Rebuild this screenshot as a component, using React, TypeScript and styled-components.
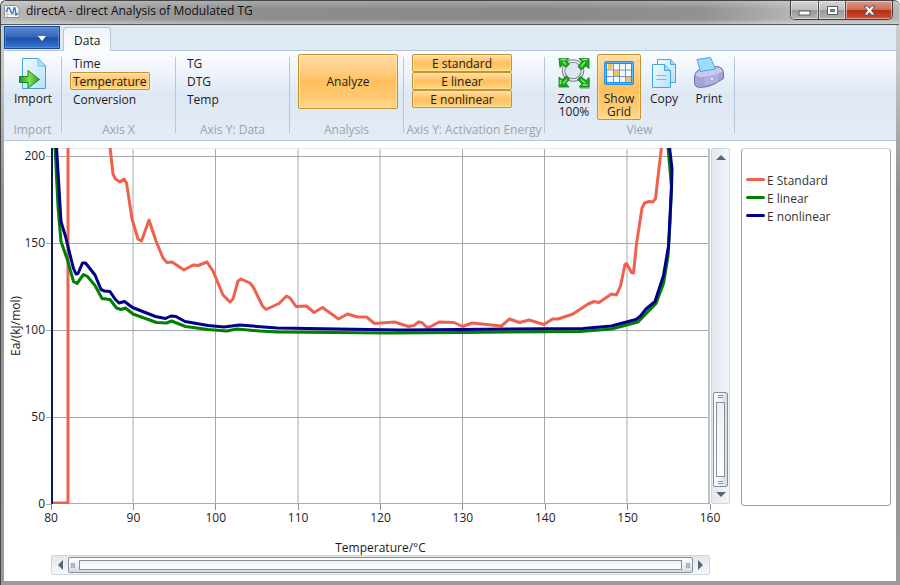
import React, { useState } from "react";
import styled, { createGlobalStyle, css } from "styled-components";

const GlobalStyle = createGlobalStyle`
  * { box-sizing: border-box; }
  html, body { margin: 0; padding: 0; }
  body, button {
    font-family: "Open Sans", "Noto Sans", sans-serif;
    font-size: 12px;
    line-height: 16px;
    color: #1c1c1c;
  }
  button { cursor: default; padding: 0; margin: 0; border: 0; background: none; }
`;

/* ---------- window frame ---------- */

const Window = styled.div`
  display: flex;
  flex-direction: column;
  min-height: 100vh;
  padding: 0 4px 4px 3px;
  background: linear-gradient(#d2d2d2 0, #c4c4c4 70px, #8f9192 190px, #9b9b9b 100%);
  border: solid #454545;
  border-width: 1px 0 0 1px;
  border-radius: 6px 6px 0 0;
`;

const TitleBar = styled.header`
  display: flex;
  align-items: flex-start;
  height: 24px;
  margin: 0 -3px;
  padding: 0 6px 0 3px;
  border-radius: 6px 6px 0 0;
  border-bottom: 1px solid #55595c;
  background:
    linear-gradient(rgba(255, 255, 255, 0.25), rgba(255, 255, 255, 0) 8px, rgba(255, 255, 255, 0) 18px, rgba(255, 255, 255, 0.35)),
    linear-gradient(90deg, #bdbdbd, #a4a4a4 8%, #8d8d8d 30%, #898989 60%, #919191 78%, #b4b4b4 88%);
`;

const Title = styled.h1`
  flex: 1;
  margin: 2px 0 0 6px;
  font-size: 12px;
  line-height: 16px;
  font-weight: 400;
  color: #111;
`;

const TitleIcon = styled.svg`
  width: 16px;
  height: 16px;
  margin-top: 2px;
`;

const WindowButtons = styled.div`
  display: flex;
  height: 19px;
  border: 1px solid #3f3f3f;
  border-top: 0;
  border-radius: 0 0 5px 5px;
  overflow: hidden;
`;

const WindowButton = styled.button<{ $close?: boolean }>`
  display: flex;
  align-items: center;
  justify-content: center;
  width: ${(p) => (p.$close ? 47 : 27)}px;
  border-left: 1px solid #4c4c4c;
  box-shadow: inset 0 0 0 1px rgba(255, 255, 255, 0.45);
  background: ${(p) =>
    p.$close
      ? "linear-gradient(#dc9a88, #cf6b56 48%, #b52f16 52%, #cd4f35)"
      : "linear-gradient(#d6d6d6, #bdbdbd 48%, #989898 52%, #b4b4b4)"};
  &:first-child { border-left: 0; }
`;

const Client = styled.div`
  display: flex;
  flex: 1;
  flex-direction: column;
  background: #fff;
`;

/* ---------- ribbon ---------- */

const TabStrip = styled.nav`
  display: flex;
  gap: 3px;
  height: 26px;
  background: #dfe9f5;
  border-bottom: 1px solid #b4c7dc;
`;

const MenuButton = styled.button`
  display: flex;
  align-items: center;
  justify-content: flex-end;
  width: 56px;
  height: 23px;
  margin-top: 1px;
  padding: 2px 13px 0 0;
  border: 1px solid #17479c;
  background: linear-gradient(#5b86cc, #3a69bb 45%, #174fad 52%, #3a78cc);
  box-shadow: inset 0 0 0 1px rgba(120, 165, 225, 0.5);
`;

const Tab = styled.button`
  height: 24px;
  margin: 2px 0 -1px;
  padding: 2px 10px 0;
  border: 1px solid #b4c7dc;
  border-bottom: 0;
  border-radius: 4px 4px 0 0;
  background: linear-gradient(#eef4fb, #fbfdff);
`;

const Ribbon = styled.section`
  display: flex;
  height: 90px;
  padding: 6px 0 7px;
  background: linear-gradient(#fbfdff, #f0f5fb 20%, #dee8f4 50%, #e3ebf6);
  border-bottom: 1px solid #b4c7dc;
`;

const Group = styled.section<{ $w: number }>`
  display: flex;
  flex-direction: column;
  justify-content: space-between;
  width: ${(p) => p.$w}px;
  border-right: 1px solid #b4c7dc;
`;

const GroupLabel = styled.h2`
  display: flex;
  justify-content: center;
  align-items: center;
  height: 6px;
  margin: 0;
  font-size: 12px;
  font-weight: 400;
  white-space: nowrap;
  color: #a0a3a8;
`;

const Items = styled.div<{ $row?: boolean; $pad?: number }>`
  display: flex;
  flex-direction: ${(p) => (p.$row ? "row" : "column")};
  gap: ${(p) => (p.$row ? 1 : 0)}px;
  margin-top: -3px;
  padding-left: ${(p) => p.$pad ?? 8}px;
`;

const lit = css`
  border-color: #c2952f;
  background: linear-gradient(#ffdda4, #ffd08a 25%, #ffc05c 50%, #ffca72 80%, #ffd98f);
  box-shadow: inset 0 0 0 1px rgba(255, 235, 150, 0.6);
`;

const Choice = styled.button<{ $on: boolean; $wide?: boolean }>`
  width: ${(p) => (p.$wide ? 100 : 80)}px;
  height: 18px;
  padding: 2px 2px 0;
  line-height: 14px;
  text-align: ${(p) => (p.$wide ? "center" : "left")};
  border: 1px solid transparent;
  border-radius: 2px;
  ${(p) => p.$on && lit}
`;

const AnalyzeButton = styled.button`
  width: 100px;
  height: 55px;
  border: 1px solid;
  border-radius: 2px;
  ${lit}
`;

const IconButton = styled.button<{ $on?: boolean }>`
  display: flex;
  flex-direction: column;
  align-items: center;
  gap: 3px;
  width: 44px;
  height: 66px;
  padding-top: 2px;
  line-height: 13px;
  border: 1px solid transparent;
  border-radius: 2px;
  ${(p) => p.$on && lit}
  svg { width: 32px; height: 32px; flex: none; }
`;

/* ---------- chart ---------- */

const Workspace = styled.main`
  display: grid;
  flex: 1;
  grid-template-columns: 20px 27px 1fr 20px 161px;
  grid-template-rows: minmax(200px, 1fr) 32px 19px 20px;
  padding: 7px 5px 6px 0;
`;

const YTitle = styled.div`
  display: flex;
  align-items: center;
  justify-content: center;
  grid-row: 1;
  grid-column: 1;
  width: 16px;
  justify-self: end;
  writing-mode: vertical-rl;
  transform: rotate(180deg);
`;

const YTicks = styled.div`
  display: flex;
  flex-direction: column;
  justify-content: space-between;
  align-items: flex-end;
  grid-row: 1;
  grid-column: 2;
  padding-top: 8px;
`;

const YTick = styled.span`
  display: flex;
  align-items: center;
  gap: 1px;
  height: 0;
  &::after {
    content: "";
    width: 5px;
    height: 1px;
    background: #a9adb2;
  }
`;

const Plot = styled.svg`
  display: block;
  grid-row: 1;
  grid-column: 3;
  width: 100%;
  height: 0;
  min-height: 100%;
  path, polyline { vector-effect: non-scaling-stroke; }
`;

const XTicks = styled.div`
  display: flex;
  justify-content: space-between;
  grid-row: 2;
  grid-column: 3;
`;

const XTick = styled.span`
  display: flex;
  flex-direction: column;
  align-items: center;
  width: 0;
  &::before {
    content: "";
    flex: none;
    width: 1px;
    height: 6px;
    background: #8d9298;
  }
`;

const XTitle = styled.div`
  grid-row: 3;
  grid-column: 3;
  text-align: center;
  line-height: 24px;
`;

const ScrollBar = styled.div<{ $vertical?: boolean }>`
  display: flex;
  flex-direction: ${(p) => (p.$vertical ? "column" : "row")};
  grid-row: ${(p) => (p.$vertical ? 1 : 4)};
  grid-column: ${(p) => (p.$vertical ? 4 : 3)};
  margin-left: ${(p) => (p.$vertical ? 1 : 0)}px;
  padding: 1px;
  border: 1px solid #cfd6de;
  border-radius: 2px;
  background: ${(p) =>
    p.$vertical ? "linear-gradient(90deg, #e3e8ee, #f3f6fa)" : "linear-gradient(#e3e8ee, #f5f8fb)"};
`;

const ScrollArrow = styled.button`
  display: flex;
  flex: none;
  align-items: center;
  justify-content: center;
  width: 15px;
  height: 15px;
`;

const Track = styled.div<{ $vertical?: boolean }>`
  display: flex;
  flex: 1;
  flex-direction: ${(p) => (p.$vertical ? "column" : "row")};
  justify-content: flex-end;
`;

const Thumb = styled.div<{ $vertical?: boolean }>`
  display: flex;
  flex-direction: ${(p) => (p.$vertical ? "column" : "row")};
  flex: ${(p) => (p.$vertical ? "0 0 95px" : "1")};
  align-items: center;
  border: 1px solid #8a9097;
  border-radius: 2px;
  background: ${(p) =>
    p.$vertical
      ? "linear-gradient(90deg, #fdfdfe, #eef1f4 50%, #d4dbe1)"
      : "linear-gradient(#fdfdfe, #eef1f4 50%, #d4dbe1)"};
`;

const Grip = styled.span<{ $vertical?: boolean }>`
  flex: none;
  width: ${(p) => (p.$vertical ? 5 : 4)}px;
  height: ${(p) => (p.$vertical ? 3 : 5)}px;
  margin: ${(p) => (p.$vertical ? "2px 0" : "0 2px")};
  ${(p) =>
    p.$vertical
      ? css`border: solid #8496aa; border-width: 1px 0;`
      : css`background: #b4c0cc; border: solid #9aa9b8; border-width: 0 1px;`}
`;

const ThumbBody = styled.span`
  flex: 1;
  align-self: stretch;
  margin: 2px;
  border: 1px solid #8a9097;
  background: linear-gradient(#eceff3, #ffffff);
`;

const Legend = styled.ul`
  grid-row: 1;
  grid-column: 5;
  margin: 0 0 -2px 11px;
  padding: 23px 4px;
  list-style: none;
  border: 1px solid #9aa2a8;
  border-top-color: #ccd3da;
  border-radius: 4px;
`;

const LegendItem = styled.li<{ $color: string }>`
  display: flex;
  align-items: center;
  gap: 2px;
  height: 18px;
  color: #333;
  &::before {
    content: "";
    width: 19px;
    height: 3px;
    margin-bottom: 3px;
    border-radius: 2px;
    background: ${(p) => p.$color};
  }
`;

/* ---------- data ---------- */

const RED = "#f0604e";
const GREEN = "#008000";
const NAVY = "#00008b";

const standard =
  "110,147 113,174 115.5,179 120,182 124,179 126.5,183 129,199 132,219 138,239 141.5,241 149,220 156,241 163,258 167,262.5 172,262 184,270 193,265 198,265.5 207,262 213,271 223,295 230,302 233,299 238,281 241,279 250,283 253.5,287.5 262.5,306 266,309.5 279,303.5 286.5,296 290,298 296,306.5 306.5,306 314,312.5 322.5,307.5 338.5,319 347.5,314 357.5,317 366.5,317 374.5,323.5 394.5,322 408.5,326.5 414,325.5 418.5,322 422,322.5 426.5,327 430,327 439,322 454,322.5 462.5,326.5 472,323 501.5,326 509.5,319 519.5,322.5 529,320 544,324.5 552.5,319 558,319 573,314 588,304 594,301.5 599,302.5 611.5,294 616.5,295 620.5,286 625,264.5 626.5,263.5 631.5,272.5 633.5,273 636.5,244 642,208 644.5,203 649,201.5 653,202 655.5,198.5 661.5,147";
const linear =
  "55,147 58,207 61,241.5 67.5,260 73.5,281.5 77,283.5 83.5,274.5 87.5,276.5 95,285.5 102,298.5 110,299.5 116.5,308 121,309.5 125.5,308 133,314 156.5,322.5 166.5,323 171.5,321 185.5,326.5 208,329.5 226.5,331 237,329 260,331 277,332 390,333 460,332.5 580,331.5 611.5,329 638,322 656,303.5 663.5,283.5 668,256.5 670,223 671.5,187 668,147";
const nonlinear =
  "56.5,147 61,221.5 65.5,236.5 73.5,268.5 76,274 78,273.5 82.5,263 85.5,263 95,275 101,289.5 104.5,291 110,291.5 115,299 119,303 124.5,301.5 132.5,307.5 155.5,316.5 165.5,318.5 171,316 176,316.5 185,321.5 208,325.5 224,327 239.5,325 277,328 400,330 460,329.5 583,328.5 611.5,326 636,319.5 640.5,316 646,309 655,301.5 663.5,275.5 668.5,246 671.5,187 672,169 669.5,147";

const legend = [
  { name: "E Standard", color: RED },
  { name: "E linear", color: GREEN },
  { name: "E nonlinear", color: NAVY },
];

/* ---------- icons ---------- */

const ImportIcon = () => (
  <svg viewBox="0 0 32 32" aria-hidden="true">
    <defs>
      <linearGradient id="page" x1="0" y1="0" x2="1" y2="1">
        <stop offset="0" stopColor="#f4fbff" />
        <stop offset="1" stopColor="#b6e0fa" />
      </linearGradient>
      <linearGradient id="arrow" x1="0" y1="0" x2="1" y2="0">
        <stop offset="0" stopColor="#1f9a1f" />
        <stop offset="0.5" stopColor="#86dc5c" />
        <stop offset="1" stopColor="#22a022" />
      </linearGradient>
    </defs>
    <path d="M5.500 1.500h15.500l7.500 7.500v22.500h-23z" fill="url(#page)" stroke="#43a4e4" />
    <path d="M21 1.500v7.500h7.500z" fill="#b9e2fb" stroke="#6dbcf0" />
    <path d="M2.500 19.500h8.500v-6l11.500 9-11.500 8.500v-5.500h-8.500z" fill="url(#arrow)" stroke="#178a1b" />
  </svg>
);

const ZoomIcon = () => (
  <svg viewBox="0 0 32 32" aria-hidden="true">
    <path d="M22 31h10v-10" fill="none" stroke="#8e9499" strokeWidth="2" opacity="0.600" />
    <circle cx="15" cy="13.500" r="9.500" fill="#dbe6f6" stroke="#80858a" strokeWidth="3.500" />
    <circle cx="15" cy="13.500" r="9.500" fill="none" stroke="#eceef0" strokeWidth="1.500" />
    <g fill="#17a81d" stroke="#0b7d14" strokeWidth="0.800">
      <path d="M1 1.500h10l-2.500 2.500 3 3-3.500 3.500-3-3-3 3z" />
      <path d="M31 1.500v10l-3-2.500-5 4-3-3.500 4-4.500-3-3.500z" />
      <path d="M1 30v-10l3 2.500 4.500-3.500 3 3-3.500 4.500 3 3.500z" />
      <path d="M31 30h-10l3-3-4.500-4.500 3-3 5.500 4 3-3z" />
    </g>
    <path d="M2.500 2.500h6M24 2.500h5.500M2.500 27v-4M29.500 28h-5M5 4.500l3 3M27 5l-4 4.500M5 26.500l4-4M27 26l-4-3.500" fill="none" stroke="#86ee66" strokeWidth="1.500" />
  </svg>
);

const GridIcon = () => (
  <svg viewBox="0 0 32 32" aria-hidden="true">
    <rect x="2.500" y="5.500" width="27" height="21" rx="1" fill="#f2f9ff" stroke="#1c8ff0" strokeWidth="3" />
    <path d="M5 7h4.500v5h-4.500zM11 13.500h5v5.500h-5zM23 20h5v5h-5z" fill="#f8c250" />
    <path d="M10.500 7v18M16.500 7v18M22.500 7v18M4 13h24M4 19.500h24" stroke="#7795c4" />
    <rect x="2.500" y="5.500" width="27" height="21" rx="1" fill="none" stroke="#5dbafa" />
  </svg>
);

const CopyIcon = () => (
  <svg viewBox="0 0 32 32" aria-hidden="true">
    <g fill="url(#page)" stroke="#45a6e6" strokeLinejoin="round">
      <path d="M9.500 2.500h13l5 5v18h-18z" />
      <path d="M22.500 2.500v5h5" fill="#a5d9fb" />
      <path d="M4.500 7.500h12l6 6v17h-18z" />
      <path d="M16.500 7.500v6h6" fill="#a5d9fb" />
      <path d="M8.500 18.500h10M8.500 22.500h10" stroke="#6cbcf0" />
    </g>
  </svg>
);

const PrintIcon = () => (
  <svg viewBox="0 0 32 32" aria-hidden="true">
    <path d="M1.500 19q1-5 5-6.500l16-3q6-.5 8 5v7l-9 5.500q-7 3.500-15 3.500-5-.5-5-5z" fill="#a5a2d6" stroke="#716fae" />
    <path d="M2.500 18.500q1-4 5-5l15-3q5-.5 7 4l-6 3-15 3z" fill="#c9c8ee" />
    <path d="M4 2.500l13.500-2 5 11.500-15 2.500z" fill="#9edcfb" stroke="#4aa6e6" />
    <path d="M11 20.500l14-3.500v8l-13 3.500z" fill="#b3b0e0" />
    <circle cx="19" cy="22" r="1" fill="#fff" />
  </svg>
);

const AppIcon = () => (
  <TitleIcon viewBox="0 0 16 16" aria-hidden="true">
    <path d="M.5 2.500h11.500l3 3v9h-14.500z" fill="#f6f8fa" stroke="#8b949c" />
    <path d="M3.500 3v11M1 11.500h13" stroke="#c5ccd2" />
    <path d="M2 9l2-4h1.500l2 5h1.500l1-5h1l1 7 2-2" fill="none" stroke="#3774b4" strokeWidth="1.300" />
  </TitleIcon>
);

const Triangle = ({ d, w, h }: { d: string; w: number; h: number }) => (
  <svg width={w} height={h} viewBox={`0 0 ${w} ${h}`} aria-hidden="true">
    <path d={d} fill="#53677a" />
  </svg>
);

/* ---------- page ---------- */

export default function App() {
  const [axisX, setAxisX] = useState("Temperature");
  const [axisY, setAxisY] = useState("");
  const [energies, setEnergies] = useState(["E standard", "E linear", "E nonlinear"]);
  const [grid, setGrid] = useState(true);
  const toggle = (name: string) =>
    setEnergies((now) => (now.includes(name) ? now.filter((n) => n !== name) : [...now, name]));

  return (
    <>
      <GlobalStyle />
      <Window>
        <TitleBar>
          <AppIcon />
          <Title>directA - direct Analysis of Modulated TG</Title>
          <WindowButtons>
            <WindowButton aria-label="Minimize">
              <svg width="13" height="13" viewBox="0 0 13 13">
                <rect x="1" y="7" width="11" height="4" fill="#fff" stroke="#555a66" />
              </svg>
            </WindowButton>
            <WindowButton aria-label="Maximize">
              <svg width="13" height="13" viewBox="0 0 13 13">
                <path d="M1.500 2.500h10v8h-10zM4.500 5.500v2h4v-2z" fill="#fff" fillRule="evenodd" stroke="#555a66" />
              </svg>
            </WindowButton>
            <WindowButton $close aria-label="Close">
              <svg width="13" height="13" viewBox="0 0 13 13">
                <path d="M1 2h3.500l2 2.500 2-2.500h3.500l-3.500 4.500 3.500 4.500h-3.500l-2-2.500-2 2.500h-3.500l3.500-4.500z" fill="#fff" stroke="#555a66" />
              </svg>
            </WindowButton>
          </WindowButtons>
        </TitleBar>
        <Client>
          <TabStrip>
            <MenuButton aria-label="Application menu">
              <svg width="8" height="5" viewBox="0 0 8 5">
                <path d="M0 0h8l-4 5z" fill="#fff" />
              </svg>
            </MenuButton>
            <Tab>Data</Tab>
          </TabStrip>
          <Ribbon>
            <Group $w={58}>
              <Items $pad={7}>
                <IconButton><ImportIcon />Import</IconButton>
              </Items>
              <GroupLabel>Import</GroupLabel>
            </Group>
            <Group $w={114}>
              <Items>
                {["Time", "Temperature", "Conversion"].map((n) => (
                  <Choice key={n} $on={axisX === n} aria-pressed={axisX === n} onClick={() => setAxisX(n)}>{n}</Choice>
                ))}
              </Items>
              <GroupLabel>Axis X</GroupLabel>
            </Group>
            <Group $w={114}>
              <Items>
                {["TG", "DTG", "Temp"].map((n) => (
                  <Choice key={n} $on={axisY === n} aria-pressed={axisY === n} onClick={() => setAxisY(n)}>{n}</Choice>
                ))}
              </Items>
              <GroupLabel>Axis Y: Data</GroupLabel>
            </Group>
            <Group $w={114}>
              <Items>
                <AnalyzeButton>Analyze</AnalyzeButton>
              </Items>
              <GroupLabel>Analysis</GroupLabel>
            </Group>
            <Group $w={141}>
              <Items>
                {["E standard", "E linear", "E nonlinear"].map((n) => (
                  <Choice key={n} $wide $on={energies.includes(n)} aria-pressed={energies.includes(n)} onClick={() => toggle(n)}>{n}</Choice>
                ))}
              </Items>
              <GroupLabel>Axis Y: Activation Energy</GroupLabel>
            </Group>
            <Group $w={190}>
              <Items $row $pad={7}>
                <IconButton><ZoomIcon />Zoom 100%</IconButton>
                <IconButton $on={grid} aria-pressed={grid} onClick={() => setGrid(!grid)}><GridIcon />Show Grid</IconButton>
                <IconButton><CopyIcon />Copy</IconButton>
                <IconButton><PrintIcon />Print</IconButton>
              </Items>
              <GroupLabel>View</GroupLabel>
            </Group>
          </Ribbon>
          <Workspace>
            <YTitle>Ea/(kJ/mol)</YTitle>
            <YTicks>
              {[200, 150, 100, 50, 0].map((v) => <YTick key={v}>{v}</YTick>)}
            </YTicks>
            <Plot viewBox="51 148 659 356" preserveAspectRatio="none" role="img" aria-label="Activation energy against temperature">
              {grid && (
                <path d="M133 148v356M215.500 148v356M298 148v356M380 148v356M462.500 148v356M544.500 148v356M627 148v356M51 156.500h659M51 243.500h659M51 330.500h659M51 417.500h659" fill="none" stroke="#a4a8ad" />
              )}
              <path d="M51 148.500h659" stroke="#e8eaec" fill="none" />
              <path d="M709 148v356" stroke="#bfc3c7" strokeWidth="2" fill="none" />
              <path d="M51 503.500h659" stroke="#a9adb2" fill="none" />
              <g fill="none" strokeWidth="3" strokeLinejoin="round">
                {energies.includes("E standard") && (
                  <>
                    <path d="M51 503h17v-355" stroke={RED} strokeLinejoin="miter" />
                    <polyline points={standard} stroke={RED} />
                  </>
                )}
                {energies.includes("E linear") && <polyline points={linear} stroke={GREEN} />}
                {energies.includes("E nonlinear") && (
                  <>
                    <path d="M52 148v356" stroke="#0a1a5c" strokeWidth="2" />
                    <polyline points={nonlinear} stroke={NAVY} />
                  </>
                )}
              </g>
            </Plot>
            <XTicks>
              {[80, 90, 100, 110, 120, 130, 140, 150, 160].map((v) => <XTick key={v}>{v}</XTick>)}
            </XTicks>
            <XTitle>Temperature/°C</XTitle>
            <ScrollBar $vertical>
              <ScrollArrow aria-label="Scroll up"><Triangle w={10} h={5} d="M0 5h10l-5-5z" /></ScrollArrow>
              <Track $vertical>
                <Thumb $vertical>
                  <Grip $vertical />
                  <ThumbBody />
                  <Grip $vertical />
                </Thumb>
              </Track>
              <ScrollArrow aria-label="Scroll down"><Triangle w={10} h={5} d="M0 0h10l-5 5z" /></ScrollArrow>
            </ScrollBar>
            <ScrollBar>
              <ScrollArrow aria-label="Scroll left"><Triangle w={5} h={10} d="M5 0v10l-5-5z" /></ScrollArrow>
              <Track>
                <Thumb>
                  <Grip />
                  <ThumbBody />
                  <Grip />
                </Thumb>
              </Track>
              <ScrollArrow aria-label="Scroll right"><Triangle w={5} h={10} d="M0 0v10l5-5z" /></ScrollArrow>
            </ScrollBar>
            <Legend>
              {legend.map((l) => <LegendItem key={l.name} $color={l.color}>{l.name}</LegendItem>)}
            </Legend>
          </Workspace>
        </Client>
      </Window>
    </>
  );
}
